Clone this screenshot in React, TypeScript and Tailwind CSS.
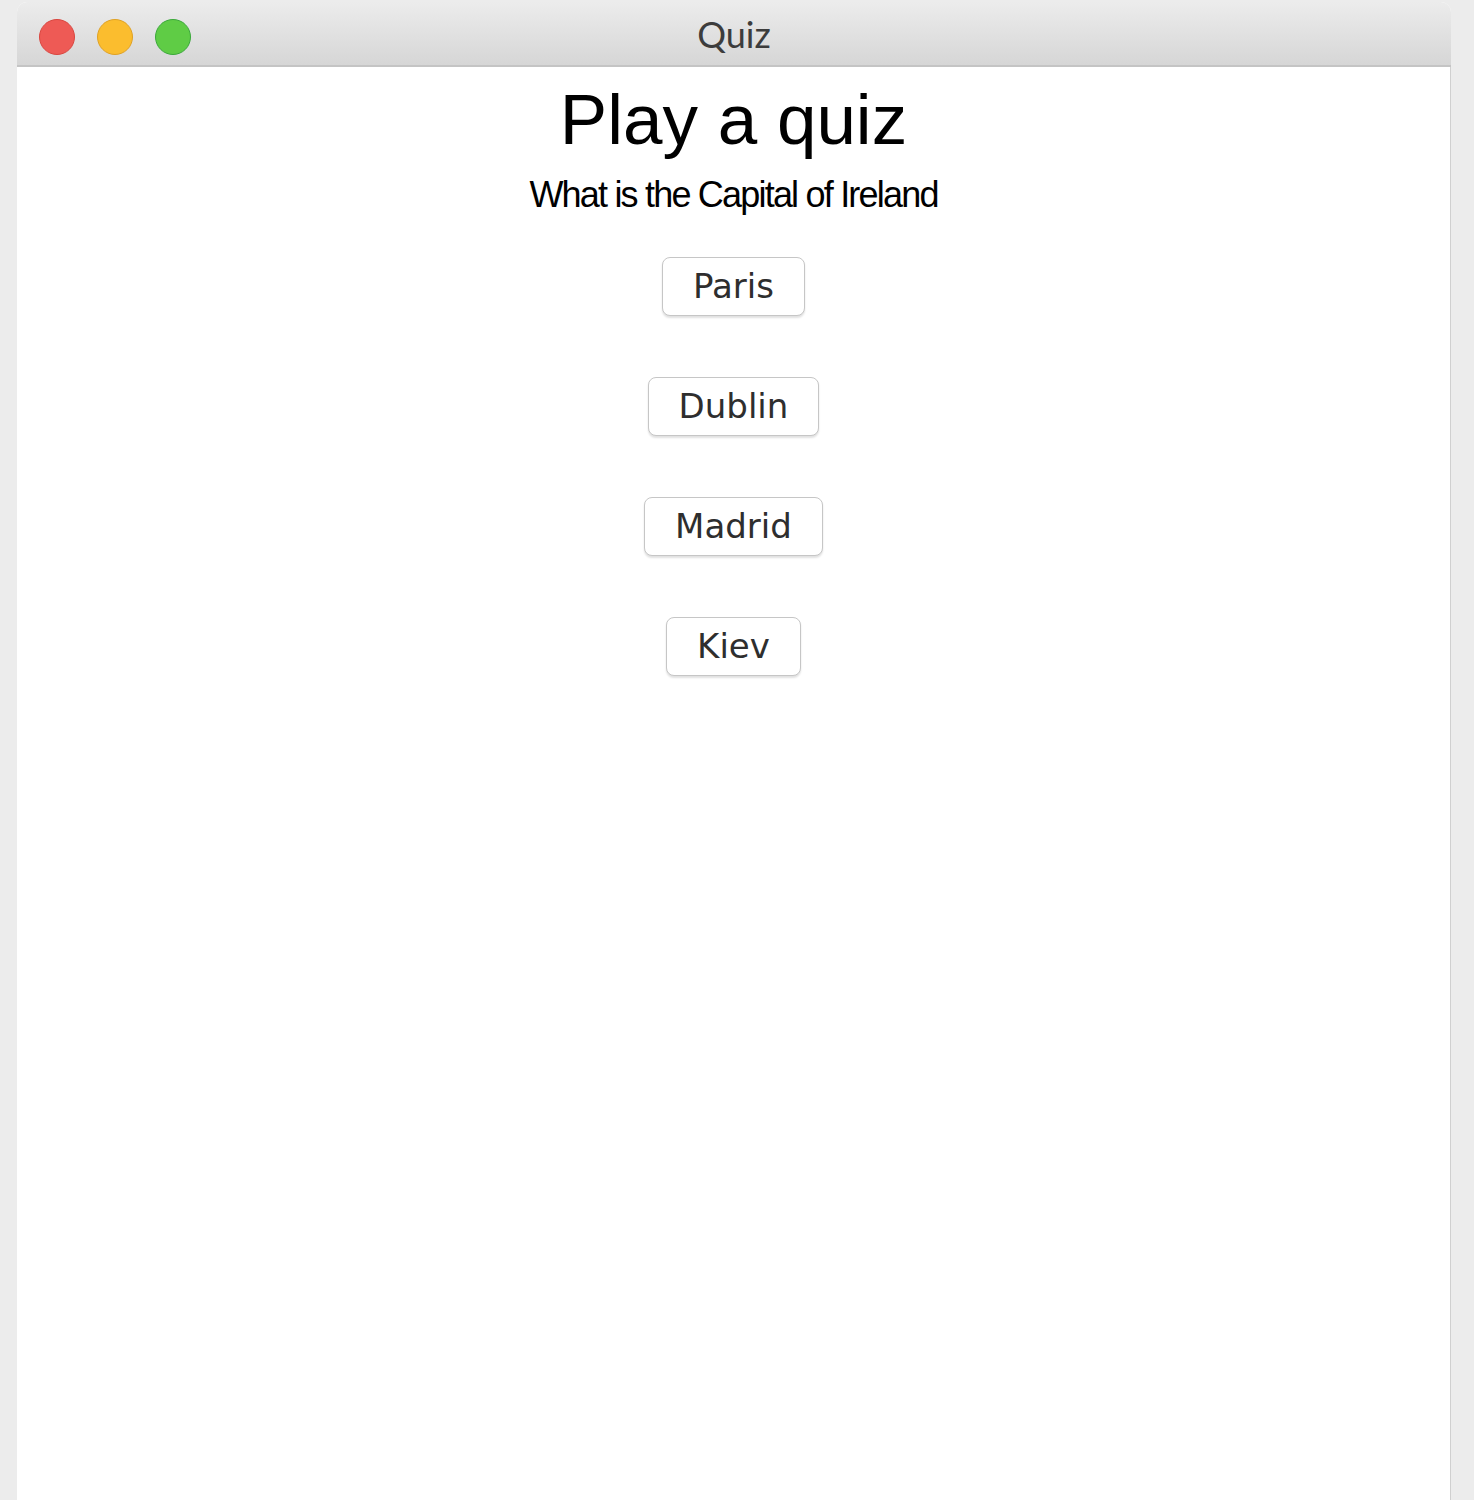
import { useState } from "react";

const answers = ["Paris", "Dublin", "Madrid", "Kiev"];

function TrafficLights() {
  return (
    <div className="absolute left-[22px] top-[17px] flex gap-[22px]">
      <span className="h-[36px] w-[36px] rounded-full border border-[#d9463f] bg-[#ee5a55]" />
      <span className="h-[36px] w-[36px] rounded-full border border-[#dfa124] bg-[#fbbd2e]" />
      <span className="h-[36px] w-[36px] rounded-full border border-[#3aa83a] bg-[#5fcc45]" />
    </div>
  );
}

export default function App() {
  const [picked, setPicked] = useState<string | null>(null);

  return (
    <div className="flex min-h-[1500px] bg-[#ececec] pl-[17px] pr-[23px] pt-[2px] font-['Liberation_Sans',Arial,sans-serif]">
      <div className="flex flex-1 flex-col overflow-hidden rounded-t-[10px] bg-white">
        <div className="relative flex h-[65px] items-center justify-center border-b-2 border-[#c4c4c4] bg-gradient-to-b from-[#ececec] to-[#d6d6d6]">
          <TrafficLights />
          <span className="text-[36px] text-[#3c3c3c] font-['Lato','Liberation_Sans',sans-serif]">Quiz</span>
        </div>
        <div className="flex flex-1 border-r border-[#d0d0d0]">
          <div className="flex flex-1 flex-col items-center">
            <h1 className="mt-[8px] text-[71px] leading-[90px] text-black">Play a quiz</h1>
            <p className="mt-[10px] text-[36px] leading-[40px] tracking-[-1.8px] text-black">What is the Capital of Ireland</p>
            <div className="mt-[42px] flex flex-col items-center gap-[61px]">
              {answers.map((a) => (
                <button
                  key={a}
                  onClick={() => setPicked(a)}
                  className={`h-[59px] rounded-[8px] border border-[#c6c6c6] px-[30px] text-[34px] text-[#2e2e2e] shadow-[0_2px_2px_rgba(0,0,0,0.12)] font-['DejaVu_Sans',sans-serif] ${picked === a ? "bg-[#e8e8e8]" : "bg-white"}`}
                >
                  {a}
                </button>
              ))}
            </div>
          </div>
        </div>
      </div>
    </div>
  );
}
